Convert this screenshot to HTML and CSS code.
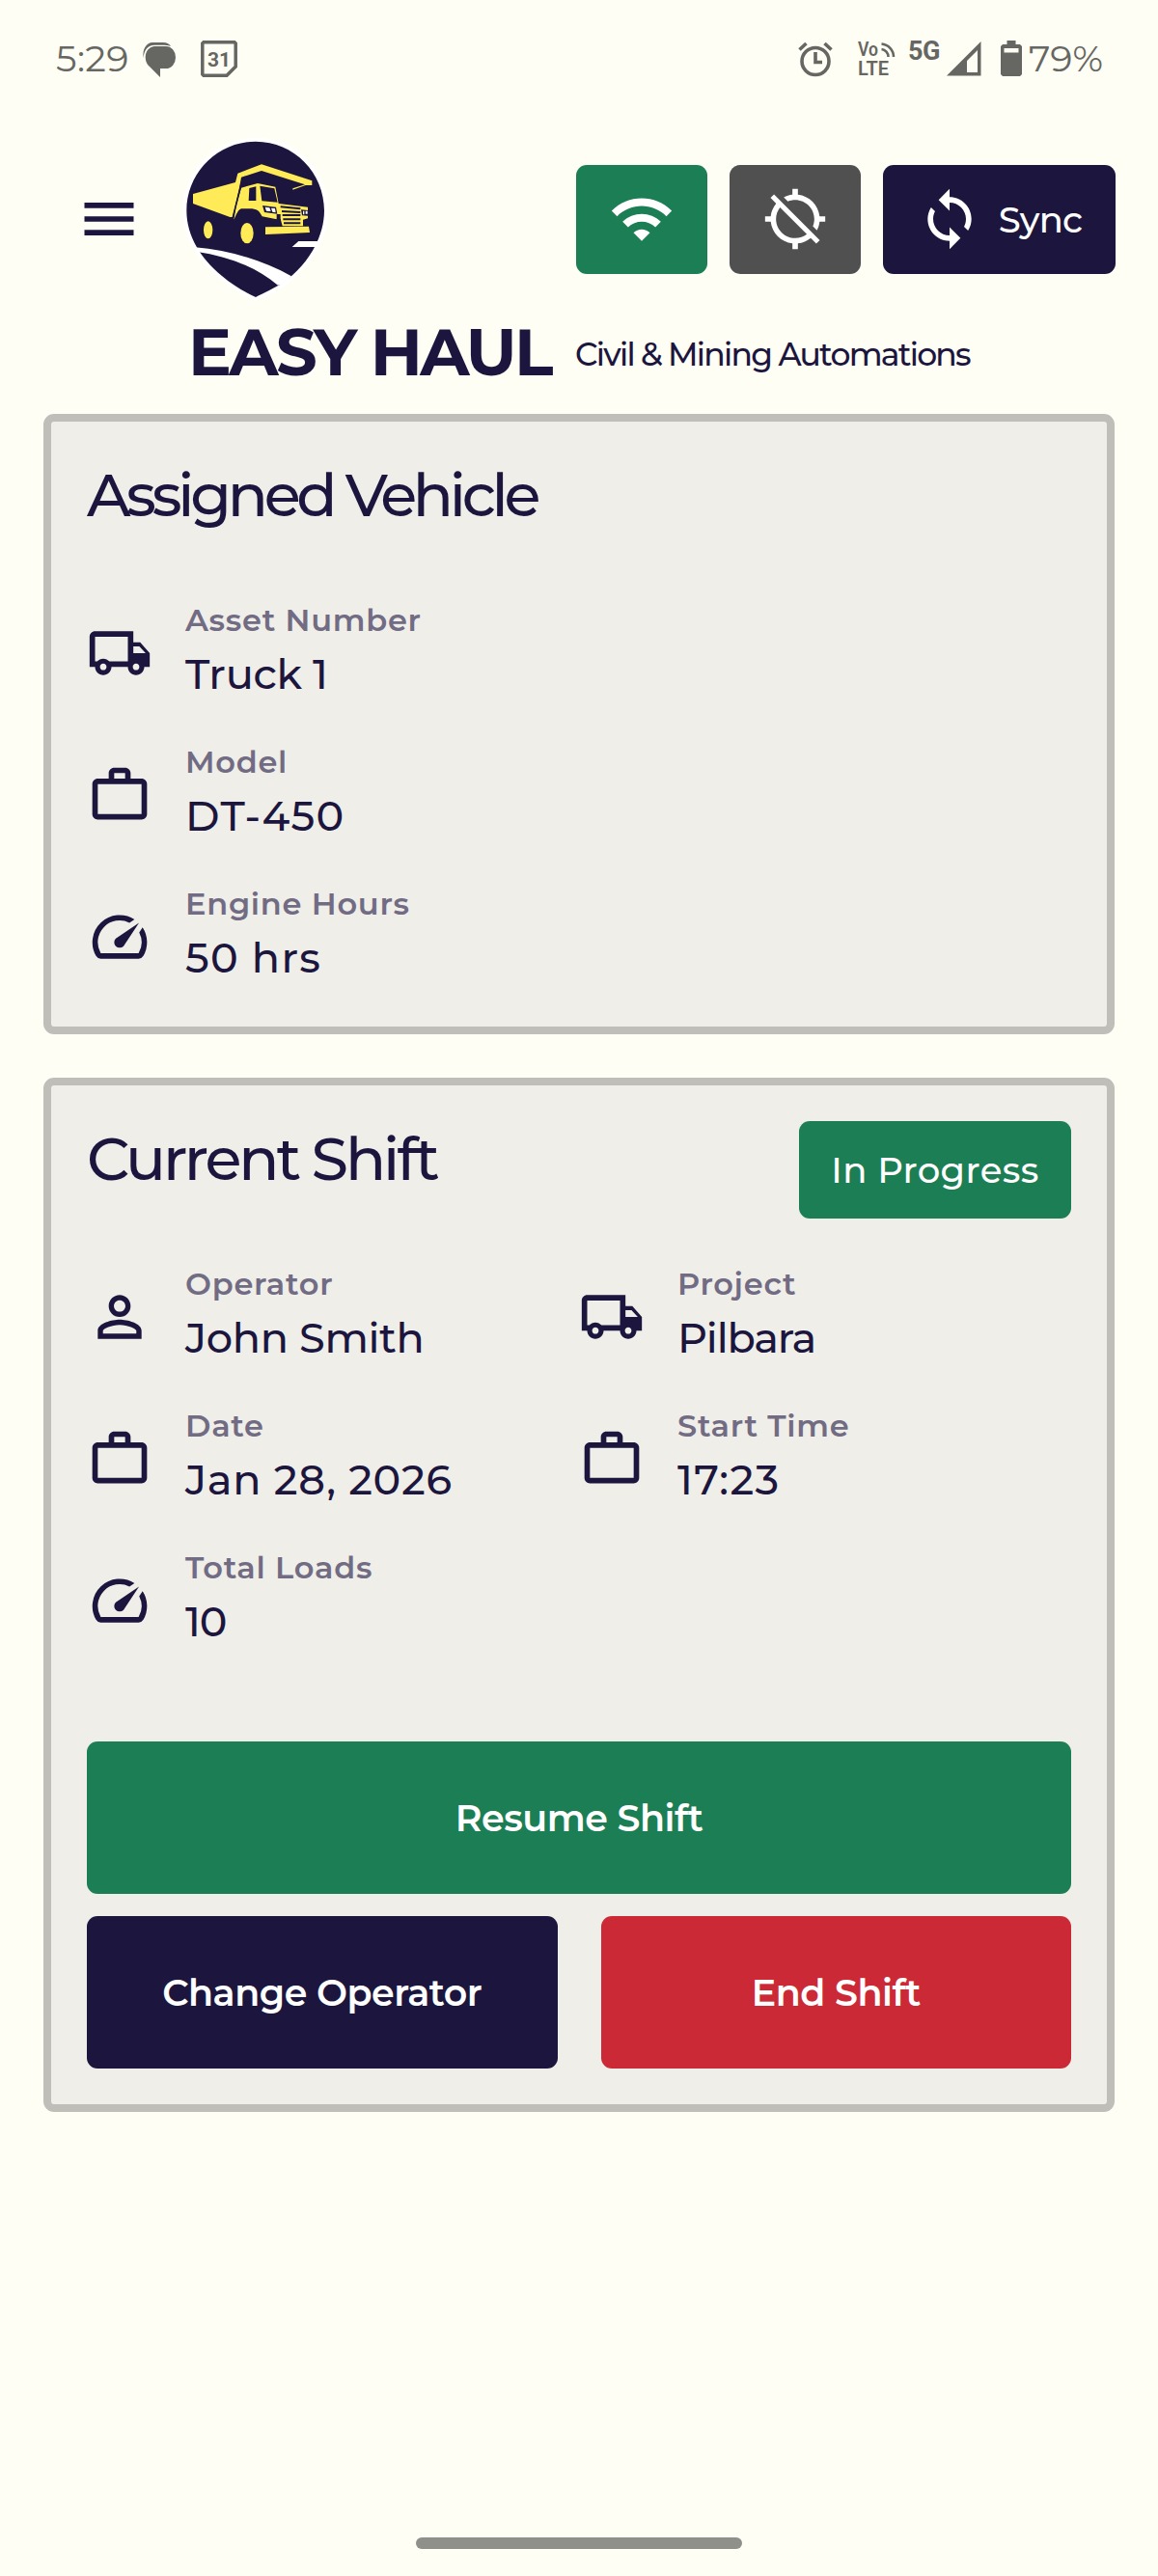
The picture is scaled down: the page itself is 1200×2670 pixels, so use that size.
FILE: index.html
```
<!DOCTYPE html>
<html lang="en">
<head>
<meta charset="UTF-8" />
<meta name="viewport" content="width=device-width, initial-scale=1" />
<title>Easy Haul</title>
<link rel="stylesheet" href="styles.css">
</head>
<body>

<svg class="sprite" xmlns="http://www.w3.org/2000/svg">
  <symbol id="truck" viewBox="0 0 24 24"><path fill-rule="evenodd" d="M19.5 8H17V4H3c-1.1 0-2 .9-2 2v11h2c0 1.66 1.34 3 3 3s3-1.34 3-3h6c0 1.66 1.34 3 3 3s3-1.34 3-3h2v-5l-3.5-4zM6 18.2c-.66 0-1.2-.54-1.2-1.2s.54-1.2 1.2-1.2 1.2.54 1.2 1.2-.54 1.2-1.2 1.2zM15 15H8.22c-.55-.61-1.33-1-2.22-1s-1.67.39-2.22 1H3V6h12v9zm3 3.2c-.66 0-1.2-.54-1.2-1.2s.54-1.2 1.2-1.2 1.2.54 1.2 1.2-.54 1.2-1.2 1.2zM17 12V9.5h2.2L21.5 12H17z"/></symbol>
  <symbol id="work" viewBox="0 0 24 24"><path fill-rule="evenodd" d="M14 6V4h-4v2h4zM4 8v11h16V8H4zm16-2c1.11 0 2 .89 2 2v11c0 1.11-.89 2-2 2H4c-1.11 0-2-.89-2-2l.01-11c0-1.11.88-2 1.99-2h4V4c0-1.11.89-2 2-2h4c1.11 0 2 .89 2 2v2h4z"/></symbol>
  <symbol id="speed" viewBox="0 0 24 24"><path d="M20.38 8.57l-1.23 1.85a8 8 0 0 1-.22 7.58H5.07A8 8 0 0 1 15.58 6.85l1.85-1.23A10 10 0 0 0 3.35 19a2 2 0 0 0 1.72 1h13.85a2 2 0 0 0 1.74-1 10 10 0 0 0-.27-10.44zm-9.79 6.84a2 2 0 0 0 2.83 0l5.66-8.49-8.49 5.66a2 2 0 0 0 0 2.83z"/></symbol>
  <symbol id="person" viewBox="0 0 24 24"><path d="M12 5.9c1.16 0 2.1.94 2.1 2.1s-.94 2.1-2.1 2.1S9.9 9.16 9.9 8s.94-2.1 2.1-2.1m0 9c2.97 0 6.1 1.46 6.1 2.1v1.1H5.9V17c0-.64 3.13-2.1 6.1-2.1M12 4C9.79 4 8 5.79 8 8s1.79 4 4 4 4-1.79 4-4-1.79-4-4-4zm0 9c-2.67 0-8 1.34-8 4v3h16v-3c0-2.66-5.33-4-8-4z"/></symbol>
</svg>

<div class="status-bar">
  <div class="status-left">
    <span class="clock">5:29</span>
    <svg class="ic-msg" viewBox="0 0 34 38"><path d="M12 5h12a10 11.5 0 0 1 0 23h-6v9L5 24C0 15 4 6 12 5z"/><path d="M.8 17C-1 8 4 1 10 1h11c4 0 7 2 8 4-3-1.300-6-1.300-9-1.300h-8C5 4 1 9 .8 17z"/></svg>
    <svg class="ic-cal" viewBox="0 0 38 38"><path d="M3 1.8h32l1.200 1.200v24l-9.200 9.200H3L1.800 35V3z" fill="none" stroke="#666662" stroke-width="3.5"/><text x="19" y="26.500" text-anchor="middle">31</text></svg>
  </div>
  <div class="status-right">
    <svg class="ic-alarm" viewBox="0 0 36 36"><g fill="none" stroke="#666662" stroke-width="3.6"><circle cx="18" cy="20.500" r="14"/><path d="M18 11v10.500h7M1.500 8.500L8.500 2M34.500 8.500L27.500 2"/></g></svg>
    <svg class="ic-lte" viewBox="0 0 38 36"><text x="0" y="15" textLength="21" lengthAdjust="spacingAndGlyphs">Vo</text><text x="0" y="35" textLength="32" lengthAdjust="spacingAndGlyphs">LTE</text><path d="M24.500 2.500A13.500 13.500 0 0 1 37 16M24.500 8A8 8 0 0 1 31.500 16" fill="none" stroke="#666662" stroke-width="2.6"/></svg>
    <span class="net">5G</span>
    <svg class="ic-signal" viewBox="0 0 36 36"><path fill-rule="evenodd" d="M35.500 0v35.500H0zM32 9L21 20v12h11z"/></svg>
    <svg class="ic-battery" viewBox="0 0 22 37"><path fill-rule="evenodd" d="M6.500 0h9v4H20l2 2v29l-2 2H2l-2-2V6l2-2h4.500zM3.500 8v4.500h15V8z"/></svg>
    <span class="percent">79%</span>
  </div>
</div>

<header>
  <div class="top-row">
    <svg class="icon menu" viewBox="0 0 24 24"><path d="M3 18h18v-2H3v2zm0-5h18v-2H3v2zm0-7v2h18V6H3z"/></svg>
    <svg class="logo" viewBox="51 36 468 510">
      <path d="M285 50C405 50 498 148 498 265C498 355 440 440 370 488C340 508 310 520 285 534C255 520 215 498 180 468C115 415 70 345 70 265C70 148 165 50 285 50Z" fill="#1c163e" stroke="#fff" stroke-width="24" paint-order="stroke"/>
      <path d="M96 379C205 388 310 420 396 469L372 492L354 497C285 440 205 408 98 392ZM418 360H492L480 378H398Z" fill="#fff"/>
      <g fill="#ffeb58">
        <path d="M90 213L222 177L229 149L303 121L460 172V186H440L400 200V196L438 184L303 141L240 161L232 205L213 285H205L90 243Z"/>
        <path d="M240 194L291 180L346 191L356 243L447 254V289L432 293V313H368L362 290H350L350 292L305 283C295 265 290 259 265 259H240C228 264 224 280 217 293L224 252Z"/>
        <path d="M315 316L450 314L453 333L315 339Z"/>
        <ellipse cx="137" cy="325" rx="14" ry="27"/>
        <ellipse cx="258" cy="335" rx="20" ry="32"/>
      </g>
      <g fill="#1c163e">
        <path d="M265 195L286 190V234H263ZM298 188L343 196L353 239L304 235Z"/>
        <path d="M306 249L348 254L352 275L312 270ZM426 262L447 264V281L429 280Z"/>
        <path d="M350 276H362V315H350Z"/>
      </g>
      <!-- gap between the tray and the cab -->
      <path d="M239 186L213 290" stroke="#1c163e" stroke-width="5"/>
      <path d="M362 253L424 259M366 267L424 270M368 279H424M370 292H424M372 304H424" stroke="#1c163e" stroke-width="6"/>
      <path d="M314 254L328 256L332 267L318 266ZM333 257L345 258L347 271L337 269ZM432 266L436 266V277H432ZM440 266H446V275H440Z" fill="#fff"/>
    </svg>
    <div class="actions">
      <div class="btn wifi"><svg class="icon" viewBox="0 0 24 24"><path d="M1 9l2 2c4.97-4.97 13.03-4.97 18 0l2-2C16.93 2.93 7.08 2.93 1 9zm8 8l3 3 3-3c-1.65-1.66-4.34-1.66-6 0zm-4-4l2 2c2.76-2.76 7.24-2.76 10 0l2-2C15.14 9.14 8.87 9.14 5 13z"/></svg></div>
      <div class="btn gps"><svg class="icon" viewBox="0 0 24 24"><path d="M20.94 11c-.46-4.17-3.77-7.48-7.94-7.94V1h-2v2.06c-1.13.12-2.19.46-3.16.97l1.5 1.5C10.16 5.19 11.06 5 12 5c3.87 0 7 3.13 7 7 0 .94-.19 1.84-.52 2.65l1.5 1.5c.5-.96.84-2.02.97-3.15H23v-2h-2.06zM3 4.27l2.04 2.04C3.97 7.62 3.25 9.23 3.06 11H1v2h2.06c.46 4.17 3.77 7.48 7.94 7.94V23h2v-2.06c1.77-.2 3.38-.91 4.69-1.98L19.73 21 21 19.73 4.27 3 3 4.27zm13.27 13.27C15.09 18.45 13.61 19 12 19c-3.87 0-7-3.13-7-7 0-1.61.55-3.09 1.46-4.27l9.81 9.81z"/></svg></div>
      <div class="btn sync"><svg class="icon" viewBox="0 0 24 24"><path d="M12 4V1L8 5l4 4V6c3.31 0 6 2.69 6 6 0 1.01-.25 1.97-.7 2.8l1.46 1.46C19.54 15.03 20 13.57 20 12c0-4.42-3.58-8-8-8zm0 14c-3.31 0-6-2.69-6-6 0-1.01.25-1.97.7-2.8L5.24 7.74C4.46 8.97 4 10.43 4 12c0 4.42 3.58 8 8 8v3l4-4-4-4v3z"/></svg><span>Sync</span></div>
    </div>
  </div>
  <div class="brand">
    <h1>EASY HAUL</h1>
    <span class="tagline">Civil &amp; Mining Automations</span>
  </div>
</header>

<main>
  <section class="card">
    <div class="card-head"><h2>Assigned Vehicle</h2></div>
    <div class="rows">
      <div class="item"><svg class="icon"><use href="#truck"/></svg><div><label>Asset Number</label><p>Truck 1</p></div></div>
      <div class="item"><svg class="icon"><use href="#work"/></svg><div><label>Model</label><p class="num">DT-450</p></div></div>
      <div class="item"><svg class="icon"><use href="#speed"/></svg><div><label>Engine Hours</label><p class="num">50 hrs</p></div></div>
    </div>
  </section>

  <section class="card shift">
    <div class="card-head"><h2>Current Shift</h2><div class="badge">In Progress</div></div>
    <div class="rows two">
      <div class="item"><svg class="icon"><use href="#person"/></svg><div><label>Operator</label><p>John Smith</p></div></div>
      <div class="item"><svg class="icon"><use href="#truck"/></svg><div><label>Project</label><p class="project">Pilbara</p></div></div>
      <div class="item"><svg class="icon"><use href="#work"/></svg><div><label>Date</label><p class="date">Jan 28, 2026</p></div></div>
      <div class="item"><svg class="icon"><use href="#work"/></svg><div><label>Start Time</label><p class="num">17:23</p></div></div>
      <div class="item"><svg class="icon"><use href="#speed"/></svg><div><label>Total Loads</label><p class="project">10</p></div></div>
    </div>
    <div class="buttons">
      <button class="resume">Resume Shift</button>
      <button class="change">Change Operator</button>
      <button class="end">End Shift</button>
    </div>
  </section>
</main>

<div class="home-bar"></div>

</body>
</html>
```
FILE: styles.css
```
* {
  box-sizing: border-box;
}
html, body {
  margin: 0; padding: 0;
}
body {
  width: 1200px;
  height: 2670px;
  display: flex;
  flex-direction: column;
  background: #fefef5;
  color: #1c163e;
  font-family: Montserrat, Inter, sans-serif;
}
h1, h2, p {
  margin: 0;
}
svg {
  display: block;
  flex-shrink: 0;
  fill: currentColor;
  overflow: visible;
}
.sprite {
  display: none;
}
.icon {
  width: 68px;
  height: 68px;
}

/* Status bar */
.status-bar {
  display: flex;
  justify-content: space-between;
  align-items: center;
  height: 121px;
  padding: 0 57px 0 58px;
  color: #666662;
}
.status-left, .status-right {
  display: flex;
  align-items: center;
}
.clock, .percent {
  font-size: 38px;
  font-weight: 450;
}
.clock { width: 75px; letter-spacing: 0.4px; }
.ic-msg { width: 34px; height: 38px; margin: 2px 0 0 15px; }
.ic-cal { width: 38px; height: 38px; margin-left: 26px; }
.ic-cal text { font: 700 21px Roboto, sans-serif; }
.ic-alarm { width: 36px; height: 36px; }
.ic-lte { width: 38px; height: 36px; margin-left: 26px; }
.ic-lte text { font: 600 20px Roboto, sans-serif; }
.net { font: 700 27px/1 Roboto, sans-serif; letter-spacing: -0.5px; margin: 0 0 14px 14px; }
.ic-signal { width: 36px; height: 36px; margin-left: 7px; }
.ic-battery { width: 22px; height: 37px; margin: 0 7px 0 20px; }

/* Header */
header {
  height: 308px;
  padding-top: 21px;
}
.top-row {
  display: flex;
  align-items: center;
  height: 170px;
  padding: 0 44px 0 79px;
}
.logo {
  width: 156px;
  height: 170px;
  margin-left: 40px;
}
.actions {
  display: flex;
  gap: 23px;
  margin-left: auto;
}
.btn {
  display: flex;
  align-items: center;
  justify-content: center;
  width: 136px;
  height: 113px;
  border-radius: 11px;
  color: #fff;
}
.wifi { background: #1c7e54; }
.gps { background: #505050; }
.sync {
  width: 241px;
  gap: 17px;
  background: #1c163e;
  font-size: 37px;
  font-weight: 500;
  letter-spacing: -0.9px;
}
.brand {
  display: flex;
  align-items: center;
  height: 90px;
  margin-top: 8px;
  padding-left: 195px;
}
h1 {
  width: 401px;
  font-size: 67px;
  font-weight: 700;
  letter-spacing: -2.7px;
  white-space: nowrap;
}
.tagline {
  padding-top: 3px;
  font-size: 33px;
  font-weight: 500;
  letter-spacing: -1.74px;
  white-space: nowrap;
}

/* Cards */
main {
  display: flex;
  flex-direction: column;
  gap: 45px;
  padding: 0 45px;
}
.card {
  padding: 37px;
  background: #efeee9;
  border: 8px solid #bfbeb9;
  border-radius: 11px;
}
.card-head {
  display: flex;
  justify-content: space-between;
  min-height: 101px;
}
h2 {
  font-size: 62px;
  line-height: 79px;
  font-weight: 500;
  letter-spacing: -4.3px;
}
.shift h2 {
  letter-spacing: -3.1px;
}
.badge {
  display: flex;
  align-items: center;
  justify-content: center;
  width: 282px;
  height: 101px;
  border-radius: 11px;
  background: #1c7e54;
  color: #fff;
  font-size: 37px;
  font-weight: 500;
  letter-spacing: 0.4px;
}
.rows {
  display: grid;
  row-gap: 34px;
  margin-top: 45px;
}
.two {
  grid-template-columns: 1fr 1fr;
}
.item {
  display: flex;
  align-items: center;
  gap: 34px;
  height: 113px;
}
.item label {
  display: block;
  color: #716c83;
  font-size: 32px;
  line-height: 45px;
  font-weight: 600;
  letter-spacing: 0.75px;
}
.item p {
  font-size: 43px;
  line-height: 68px;
  font-weight: 500;
  letter-spacing: -0.3px;
}
.item .num { letter-spacing: 1.3px; }
.item .date { letter-spacing: 0.8px; }
.item .project { letter-spacing: -1.2px; }
.buttons {
  display: grid;
  grid-template-columns: 1fr 1fr;
  gap: 23px 45px;
  margin-top: 90px;
}
button {
  height: 158px;
  border: none;
  border-radius: 11px;
  color: #fff;
  font: 600 38px Montserrat, Inter, sans-serif;
  letter-spacing: -0.45px;
}
.resume { grid-column: 1 / 3; background: #1c7e54; }
.change { background: #1c163e; }
.end { background: #cc2936; }

.home-bar {
  width: 338px;
  height: 12px;
  margin: auto auto 28px;
  border-radius: 6px;
  background: #90908b;
}
```
